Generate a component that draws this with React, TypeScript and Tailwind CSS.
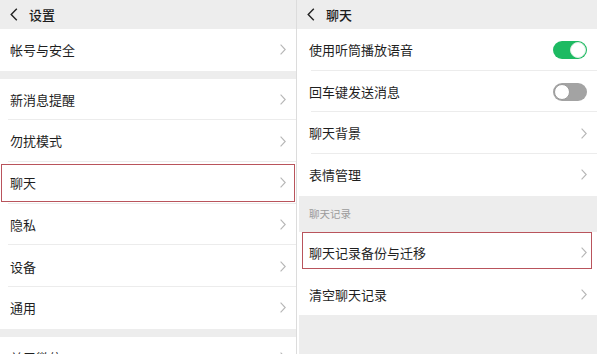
const font = { fontFamily: '"Noto Sans CJK SC", "Noto Sans", sans-serif' }

function Chevron() {
  return (
    <svg width="6" height="11" viewBox="0 0 6 11" className="shrink-0">
      <path d="M0.6 0.6 L5.2 5.5 L0.6 10.4" fill="none" stroke="#b6b6b6" strokeWidth="1.1" />
    </svg>
  )
}

function BackArrow() {
  return (
    <svg width="8" height="13" viewBox="0 0 8 13" className="shrink-0">
      <path d="M6.8 0.8 L1.2 6.5 L6.8 12.2" fill="none" stroke="#222" strokeWidth="1.4" />
    </svg>
  )
}

function Toggle({ on }: { on: boolean }) {
  return (
    <div
      className={`relative w-[34px] h-[18px] rounded-full ${on ? 'bg-[#1dba62]' : 'bg-[#a3a3a3]'}`}
    >
      <div
        className={`absolute top-[1px] w-[16px] h-[16px] rounded-full bg-white ${
          on ? 'right-[1px] border border-[#d8efe0]' : 'left-[1px] border border-[#9a9a9a]'
        }`}
      />
    </div>
  )
}

function Header({ title }: { title: string }) {
  return (
    <div className="h-[29px] shrink-0 flex items-center pl-[10px] bg-[#ededed]">
      <BackArrow />
      <span className="ml-[11px] text-[13px] font-medium text-[#1c1c1c]">{title}</span>
    </div>
  )
}

function Row({
  label,
  right,
  divider,
  boxed,
  inset,
}: {
  label: string
  right?: React.ReactNode
  divider?: boolean
  boxed?: boolean
  inset?: number
}) {
  return (
    <div className="relative h-[41.7px] shrink-0 bg-white">
      <div className="h-full flex items-center justify-between pl-[10px] pr-[10px]">
        <span className="text-[13px] text-[#1f1f1f]">{label}</span>
        {right ?? <Chevron />}
      </div>
      {divider && (
        <div className={`absolute bottom-0 right-0 h-px bg-[#ececec] ${inset ? 'left-[12px]' : 'left-[8px]'}`} />
      )}
      {boxed && (
        <div className="absolute inset-x-[1px] top-[2px] bottom-[2px] border-[1.5px] border-[#b9545c]" />
      )}
    </div>
  )
}

export default function App() {
  return (
    <div className="w-[597px] h-[354px] flex overflow-hidden bg-[#ededed]" style={font}>
      {/* 设置 */}
      <div className="w-[296px] shrink-0 flex flex-col">
        <Header title="设置" />
        <Row label="帐号与安全" />
        <div className="h-[8px] shrink-0" />
        <Row label="新消息提醒" divider />
        <Row label="勿扰模式" divider />
        <Row label="聊天" divider boxed />
        <Row label="隐私" divider />
        <Row label="设备" divider />
        <Row label="通用" />
        <div className="h-[8px] shrink-0" />
        <Row label="关于微信" />
      </div>

      <div className="w-px shrink-0 bg-[#dcdcdc]" />
      <div className="w-[2px] shrink-0 bg-white" />

      {/* 聊天 */}
      <div className="flex-1 flex flex-col">
        <div className="-ml-[2px]">
          <Header title="聊天" />
        </div>
        <Row label="使用听筒播放语音" right={<Toggle on />} divider inset={1} />
        <Row label="回车键发送消息" right={<Toggle on={false} />} divider inset={1} />
        <Row label="聊天背景" divider inset={1} />
        <Row label="表情管理" />
        <div className="h-[36px] shrink-0 flex items-center pl-[10px]">
          <span className="text-[10.5px] text-[#9b9b9b]">聊天记录</span>
        </div>
        <div className="relative shrink-0">
          <Row label="聊天记录备份与迁移" />
          <div className="absolute left-[3px] right-[5px] top-0 bottom-[4px] border-[1.5px] border-[#b9545c]" />
        </div>
        <Row label="清空聊天记录" />
      </div>
    </div>
  )
}
